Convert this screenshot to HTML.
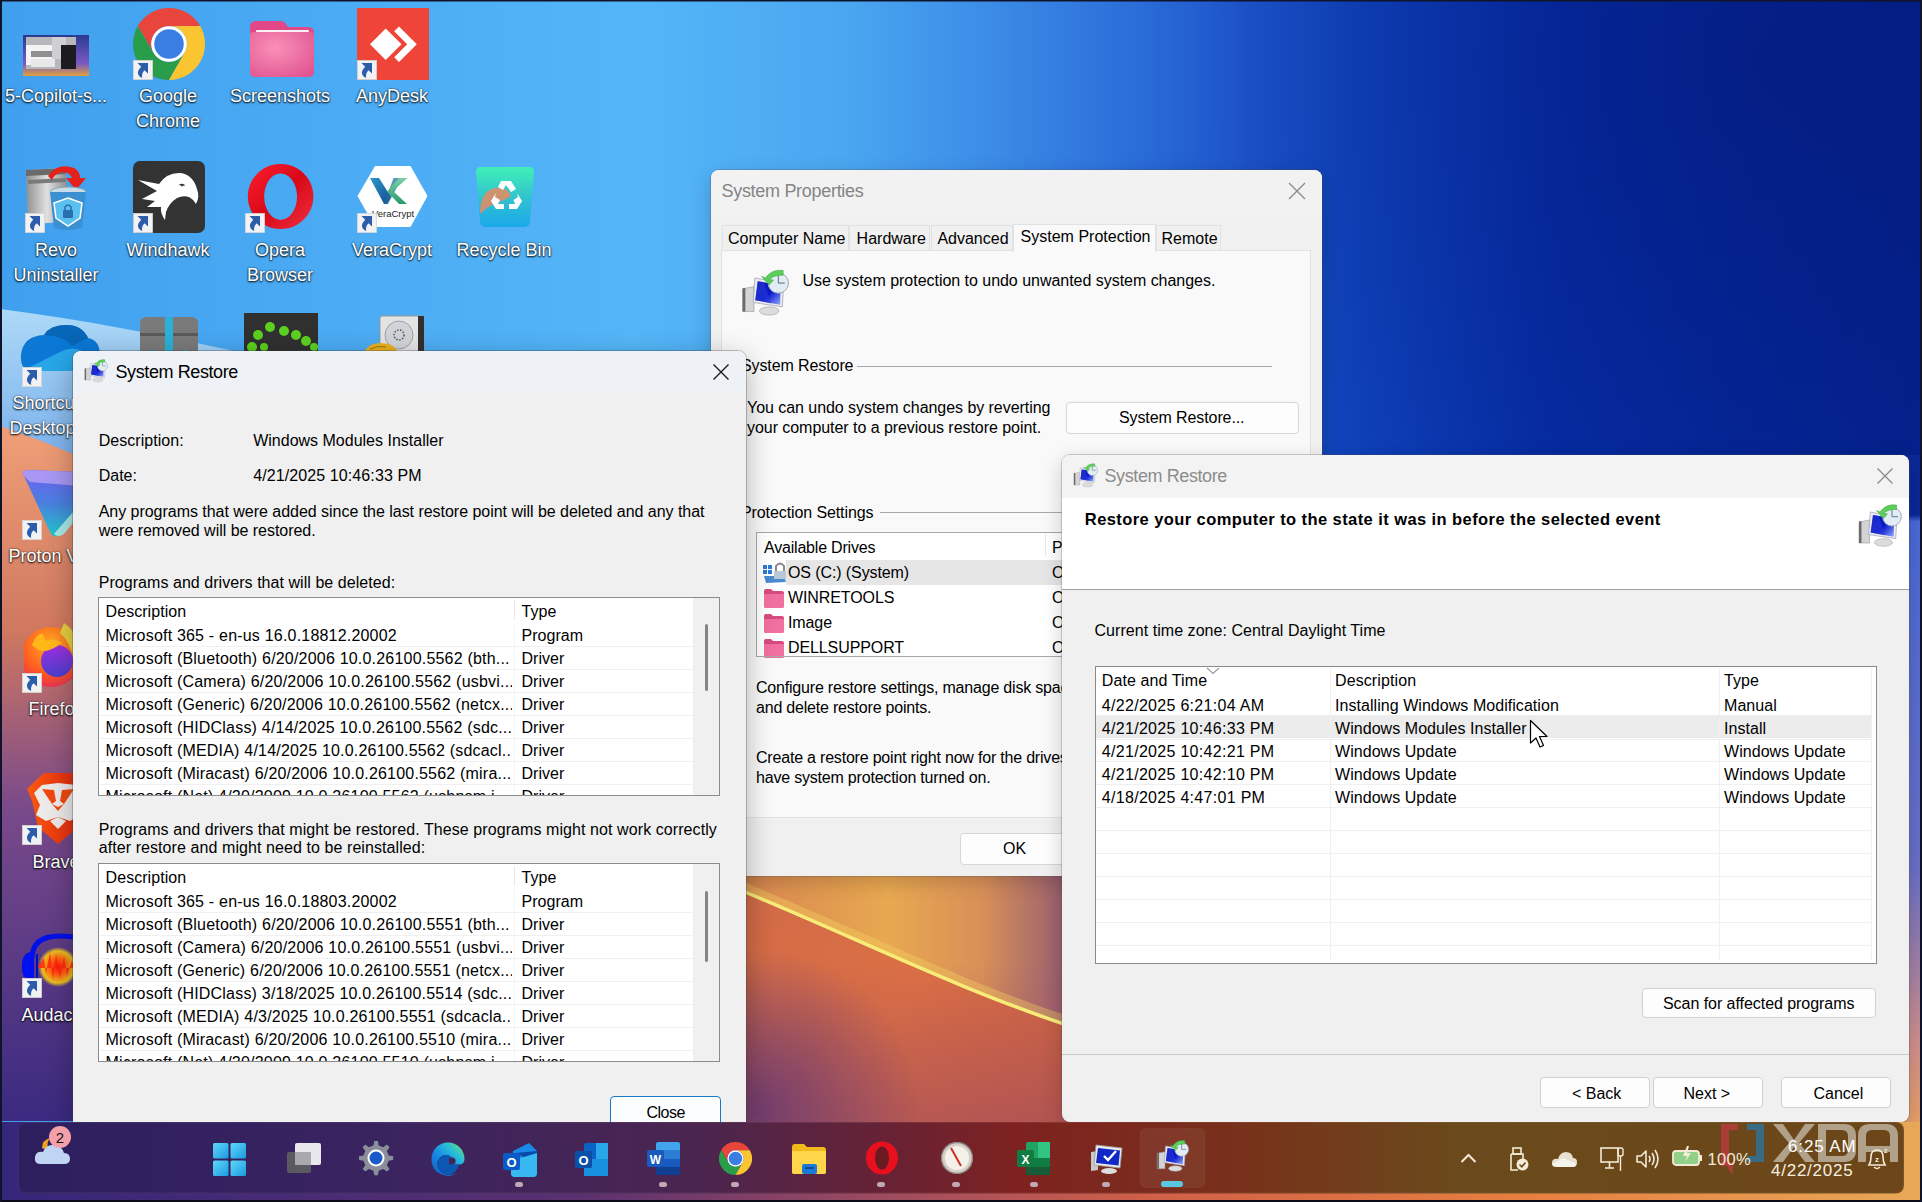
<!DOCTYPE html><html><head><meta charset="utf-8"><style>
html,body{margin:0;padding:0;width:1922px;height:1202px;overflow:hidden;background:#000;}
body{position:relative;font-family:"Liberation Sans",sans-serif;color:#000;}
.t{position:absolute;white-space:pre;font-family:"Liberation Sans",sans-serif;}
.lbl{position:absolute;white-space:pre;color:#fff;text-shadow:0 1px 2px rgba(0,0,0,.95),0 0 2px rgba(0,0,0,.7);text-align:center;font-size:18px;line-height:25px;width:110px;}
.dlg{position:absolute;overflow:hidden;background:#f0f0f0;border-radius:8px;}
.btn{position:absolute;box-sizing:border-box;background:#fdfdfd;border:1px solid #d0d0d0;border-radius:4px;}
svg{position:absolute;}
</style></head><body>
<svg width="1922" height="1202" style="left:0;top:0">
<defs>
<linearGradient id="bg" x1="0" y1="0" x2="1922" y2="0" gradientUnits="userSpaceOnUse">
<stop offset="0.000" stop-color="#40a0ee"/><stop offset="0.200" stop-color="#4cacf4"/><stop offset="0.330" stop-color="#54b6f8"/><stop offset="0.442" stop-color="#4aa6f0"/><stop offset="0.520" stop-color="#3a8ae6"/><stop offset="0.593" stop-color="#2a6cd8"/><stop offset="0.650" stop-color="#1c52c8"/><stop offset="0.708" stop-color="#0e40b8"/><stop offset="0.806" stop-color="#062ca4"/><stop offset="1.000" stop-color="#04228e"/></linearGradient>
<radialGradient id="dk" cx="1760" cy="60" r="560" gradientUnits="userSpaceOnUse">
<stop offset="0" stop-color="#000a58" stop-opacity="0.3"/><stop offset="1" stop-color="#000a58" stop-opacity="0"/></radialGradient>
<linearGradient id="bgv" x1="0" y1="0" x2="0" y2="1202" gradientUnits="userSpaceOnUse">
<stop offset="0" stop-color="#000020" stop-opacity="0.15"/><stop offset="0.3" stop-color="#000020" stop-opacity="0"/><stop offset="1" stop-color="#000020" stop-opacity="0"/></linearGradient>
<linearGradient id="band" x1="0" y1="300" x2="0" y2="460" gradientUnits="userSpaceOnUse">
<stop offset="0" stop-color="#b0dcf8"/><stop offset="1" stop-color="#7ab0ec"/></linearGradient>
<linearGradient id="org" x1="0" y1="420" x2="0" y2="1121" gradientUnits="userSpaceOnUse">
<stop offset="0" stop-color="#f0a078"/><stop offset="0.3" stop-color="#d07860"/><stop offset="0.55" stop-color="#7a4a8a"/><stop offset="1" stop-color="#3a2a80"/></linearGradient>
<linearGradient id="gap" x1="746" y1="876" x2="1062" y2="1121" gradientUnits="userSpaceOnUse">
<stop offset="0" stop-color="#d06a48"/><stop offset="0.5" stop-color="#dc7044"/><stop offset="1" stop-color="#c86040"/></linearGradient>
<radialGradient id="gapL" cx="760" cy="1110" r="160" gradientUnits="userSpaceOnUse">
<stop offset="0" stop-color="#6a3a70" stop-opacity="0.9"/><stop offset="1" stop-color="#6a3a70" stop-opacity="0"/></radialGradient>
<linearGradient id="gapV" x1="0" y1="960" x2="0" y2="1121" gradientUnits="userSpaceOnUse">
<stop offset="0" stop-color="#a04a60" stop-opacity="0"/><stop offset="1" stop-color="#a04a60" stop-opacity="0.55"/></linearGradient>
<linearGradient id="yel" x1="746" y1="876" x2="1062" y2="876" gradientUnits="userSpaceOnUse">
<stop offset="0" stop-color="#d88850"/><stop offset="0.45" stop-color="#e8a850"/><stop offset="0.75" stop-color="#d89058"/><stop offset="1" stop-color="#9a6070"/></linearGradient>
<linearGradient id="rstrip" x1="0" y1="455" x2="0" y2="1121" gradientUnits="userSpaceOnUse">
<stop offset="0" stop-color="#0a2898"/><stop offset="0.09" stop-color="#0a2898"/><stop offset="0.1" stop-color="#4a6ad8"/><stop offset="0.62" stop-color="#6a70c8"/><stop offset="0.76" stop-color="#a080a8"/><stop offset="0.88" stop-color="#d09090"/><stop offset="1" stop-color="#e8a068"/></linearGradient>
<linearGradient id="tb" x1="0" y1="0" x2="1922" y2="0" gradientUnits="userSpaceOnUse">
<stop offset="0" stop-color="#2e2266"/><stop offset="0.3" stop-color="#40245a"/><stop offset="0.45" stop-color="#5a2040"/><stop offset="0.55" stop-color="#742420"/><stop offset="0.75" stop-color="#7a3018"/><stop offset="1" stop-color="#8a5018"/></linearGradient>
<linearGradient id="tbo" x1="0" y1="0" x2="1922" y2="0" gradientUnits="userSpaceOnUse">
<stop offset="0" stop-color="#3a2a80"/><stop offset="0.4" stop-color="#8a4a70"/><stop offset="0.6" stop-color="#c06050"/><stop offset="1" stop-color="#e0a060"/></linearGradient>
</defs>
<rect width="1922" height="1202" fill="url(#bg)"/>

<rect width="1922" height="1202" fill="url(#dk)"/>
<path d="M0 309 C 120 325, 260 352, 420 400 L 420 1121 L0 1121 Z" fill="url(#band)"/>
<path d="M0 426 C 40 440, 70 452, 100 466 L 100 1121 L0 1121 Z" fill="url(#org)"/>
<rect x="740" y="870" width="330" height="260" fill="url(#gap)"/>
<path d="M740 870 L1070 870 L1070 1026 C 960 990, 850 935, 740 890 Z" fill="url(#yel)"/>
<rect x="740" y="870" width="330" height="260" fill="url(#gapV)"/>
<path d="M740 886 C 850 931, 960 986, 1070 1022" stroke="#f8d860" stroke-width="10" stroke-opacity="0.35" fill="none"/><path d="M740 890 C 850 935, 960 990, 1070 1026" stroke="#f8ec78" stroke-width="3.5" fill="none"/>
<rect x="740" y="870" width="330" height="260" fill="url(#gapL)"/>
<rect x="1900" y="455" width="22" height="670" fill="url(#rstrip)"/>
<rect x="0" y="0" width="1922" height="1.5" fill="#10142a"/>
<rect x="0" y="0" width="2" height="1202" fill="#10142a"/>
<rect x="1920" y="0" width="2" height="1202" fill="#10142a"/>
<rect x="0" y="1200" width="1922" height="2" fill="#10142a"/>
</svg>
<svg width="66" height="41" style="left:23px;top:35px" viewBox="0 0 66 41"><defs><linearGradient id="thb" x1="0" y1="0" x2="0" y2="1"><stop offset="0" stop-color="#2a3a90"/><stop offset="0.7" stop-color="#7a5ac0"/><stop offset="1" stop-color="#e0a040"/></linearGradient></defs><rect width="66" height="41" fill="url(#thb)"/><rect x="3" y="2" width="50" height="32" fill="#b8b8bc"/><rect x="3" y="10" width="26" height="20" fill="#f4f4f4"/><rect x="8" y="16" width="22" height="6" fill="#909090"/><rect x="29" y="2" width="14" height="22" fill="#d0d0d4"/><rect x="38" y="10" width="15" height="24" fill="#1c1c20"/><rect x="8" y="24" width="24" height="8" fill="#e8e8e8"/></svg>
<div class="lbl" style="left:-14px;width:140px;top:84.4px">5-Copilot-s...</div>
<svg width="72" height="72" style="left:133px;top:8px" viewBox="0 0 72 72"><path d="M67.18 18.00 A36 36 0 0 0 4.82 18.00 L20.57 44.91 A17.82 17.82 0 0 1 36.00 18.18 Z" fill="#e8453c"/><path d="M4.82 18.00 A36 36 0 0 0 36.00 72.00 L51.43 44.91 A17.82 17.82 0 0 1 20.57 44.91 Z" fill="#2a9d4a"/><path d="M36.00 72.00 A36 36 0 0 0 67.18 18.00 L36.00 18.18 A17.82 17.82 0 0 1 51.43 44.91 Z" fill="#fbc531"/><circle cx="36" cy="36" r="17.82" fill="#fff"/><circle cx="36" cy="36" r="14.76" fill="#3a7ee4"/></svg>
<svg width="20" height="20" style="left:133px;top:60px" viewBox="0 0 20 20"><rect x="0.5" y="0.5" width="19" height="19" fill="#f2f2f2" stroke="#d8d8d8" stroke-width="0.8"/><path d="M4.5 3 L15 3 L15 13.5 L11.6 10.2 Q8.4 13 9.2 18 Q3.8 15.5 5.2 11 Q6.2 8.6 8.2 6.8 Z" fill="#2c5cac"/></svg>
<div class="lbl" style="left:98px;width:140px;top:84.4px">Google</div>
<div class="lbl" style="left:98px;width:140px;top:109.1px">Chrome</div>
<svg width="64" height="56" style="left:249.5px;top:20.5px" viewBox="0 0 64 56"><defs><radialGradient id="fld" cx="0.4" cy="0.35" r="0.8"><stop offset="0" stop-color="#fa90b8"/><stop offset="1" stop-color="#e05490"/></radialGradient></defs><path d="M0 6 Q0 0 6 0 L30 0 Q34 0 36 3 L38 6 L58 6 Q64 6 64 12 L64 50 Q64 56 58 56 L6 56 Q0 56 0 50Z" fill="#e04888"/><rect x="6" y="9" width="53" height="5" rx="1" fill="#fbeef4"/><path d="M0 14 Q0 11 3 11 L61 11 Q64 11 64 14 L64 50 Q64 56 58 56 L6 56 Q0 56 0 50Z" fill="url(#fld)"/></svg>
<div class="lbl" style="left:210px;width:140px;top:84.4px">Screenshots</div>
<svg width="72" height="72" style="left:357px;top:8px" viewBox="0 0 72 72"><rect width="72" height="72" fill="#ef4438"/><path d="M28.7 20.5 L44.5 36.2 L28.7 52 L13 36.2Z" fill="#fff"/><path d="M42 18.5 L59.8 36.2 L42 54 L37.2 49.2 L50.2 36.2 L37.2 23.2Z" fill="#fff"/></svg>
<svg width="20" height="20" style="left:357px;top:60px" viewBox="0 0 20 20"><rect x="0.5" y="0.5" width="19" height="19" fill="#f2f2f2" stroke="#d8d8d8" stroke-width="0.8"/><path d="M4.5 3 L15 3 L15 13.5 L11.6 10.2 Q8.4 13 9.2 18 Q3.8 15.5 5.2 11 Q6.2 8.6 8.2 6.8 Z" fill="#2c5cac"/></svg>
<div class="lbl" style="left:322px;width:140px;top:84.4px">AnyDesk</div>
<svg width="70" height="70" style="left:22px;top:162px" viewBox="0 0 70 70"><defs><linearGradient id="rvb" x1="0" y1="0" x2="1" y2="0"><stop offset="0" stop-color="#909090"/><stop offset="0.5" stop-color="#e0e0e0"/><stop offset="1" stop-color="#8a8a8a"/></linearGradient></defs><path d="M4 8 L44 6 L46 60 L6 62Z" fill="url(#rvb)"/><path d="M4 8 L44 6 L44 12 L4 14Z" fill="#6a6a6a"/><path d="M6 18 L44 16 L44 20 L6 22Z" fill="#7a7a7a"/><path d="M26 14 Q36 0 52 6 Q58 9 58 16 L64 16 L54 28 L44 16 L50 16 Q48 10 40 10 Q32 12 30 18Z" fill="#e8201a"/><ellipse cx="46" cy="30" rx="18" ry="5" fill="#c8dcea" stroke="#8aa" stroke-width="1"/><path d="M28 30 L64 30 L60 66 Q46 70 32 66Z" fill="#3a90d0"/><path d="M46 36 L60 41 L58 56 L46 64 L34 56 L32 41Z" fill="#5ac0f0" stroke="#fff" stroke-width="1.5"/><rect x="41" y="48" width="10" height="8" rx="1" fill="#2a70b0"/><path d="M43 48 L43 45 Q46 41 49 45 L49 48" stroke="#2a70b0" stroke-width="1.6" fill="none"/></svg>
<svg width="20" height="20" style="left:25px;top:213px" viewBox="0 0 20 20"><rect x="0.5" y="0.5" width="19" height="19" fill="#f2f2f2" stroke="#d8d8d8" stroke-width="0.8"/><path d="M4.5 3 L15 3 L15 13.5 L11.6 10.2 Q8.4 13 9.2 18 Q3.8 15.5 5.2 11 Q6.2 8.6 8.2 6.8 Z" fill="#2c5cac"/></svg>
<div class="lbl" style="left:-14px;width:140px;top:238.4px">Revo</div>
<div class="lbl" style="left:-14px;width:140px;top:263.1px">Uninstaller</div>
<svg width="72" height="72" style="left:133px;top:161px" viewBox="0 0 72 72"><rect width="72" height="72" rx="7" fill="#333"/><path d="M5 19 L26 23 Q34 11 48 12 Q60 14 64 28 Q67 36 63 43 Q60 38 56 36 Q50 34 44 37 Q36 42 33 51 L32 59 Q27 52 28 46 L14 46 L22 40 L9 38 L24 30Z" fill="#fff"/><path d="M46.5 24 Q49 22.5 51.5 24.5" stroke="#333" stroke-width="1.3" fill="none"/><circle cx="49" cy="24.6" r="1" fill="#333"/></svg>
<svg width="20" height="20" style="left:133px;top:213px" viewBox="0 0 20 20"><rect x="0.5" y="0.5" width="19" height="19" fill="#f2f2f2" stroke="#d8d8d8" stroke-width="0.8"/><path d="M4.5 3 L15 3 L15 13.5 L11.6 10.2 Q8.4 13 9.2 18 Q3.8 15.5 5.2 11 Q6.2 8.6 8.2 6.8 Z" fill="#2c5cac"/></svg>
<div class="lbl" style="left:98px;width:140px;top:238.4px">Windhawk</div>
<svg width="68" height="68" style="left:247px;top:163px" viewBox="0 0 68 68"><defs><linearGradient id="opr" x1="0" y1="0" x2="1" y2="1"><stop offset="0" stop-color="#ff2030"/><stop offset="0.5" stop-color="#d80818"/><stop offset="1" stop-color="#f03040"/></linearGradient></defs><path d="M33.6 1 A32.8 32.5 0 1 0 33.61 1Z M33.6 10.5 A16.4 23.2 0 1 1 33.59 10.5Z" fill="url(#opr)" fill-rule="evenodd"/></svg>
<svg width="20" height="20" style="left:245px;top:213px" viewBox="0 0 20 20"><rect x="0.5" y="0.5" width="19" height="19" fill="#f2f2f2" stroke="#d8d8d8" stroke-width="0.8"/><path d="M4.5 3 L15 3 L15 13.5 L11.6 10.2 Q8.4 13 9.2 18 Q3.8 15.5 5.2 11 Q6.2 8.6 8.2 6.8 Z" fill="#2c5cac"/></svg>
<div class="lbl" style="left:210px;width:140px;top:238.4px">Opera</div>
<div class="lbl" style="left:210px;width:140px;top:263.1px">Browser</div>
<svg width="72" height="64" style="left:357px;top:165px" viewBox="0 0 72 64"><path d="M18 1 L53.5 1 L70.5 31 L53.5 62 L18 62 L0.5 31Z" fill="#fff"/><defs><linearGradient id="vcv" x1="0" y1="0" x2="1" y2="1"><stop offset="0" stop-color="#2a9ac8"/><stop offset="1" stop-color="#1a4a90"/></linearGradient><linearGradient id="vcc" x1="0" y1="0" x2="0" y2="1"><stop offset="0" stop-color="#7ad0a8"/><stop offset="1" stop-color="#2a9a68"/></linearGradient></defs><path d="M13 13 L22 13 L34 32 L30 39 L27 39Z" fill="url(#vcv)"/><path d="M36.5 13 L45 13 L31 39 L27 39Z" fill="#1a6a98" opacity="0.7"/><path d="M50.5 13 L36 26 L50 39 L42 39 L30 26.5 L42 13Z" fill="url(#vcc)"/><text x="36" y="52" font-size="9.5" text-anchor="middle" fill="#222" font-family="Liberation Sans">VeraCrypt</text></svg>
<svg width="20" height="20" style="left:357px;top:213px" viewBox="0 0 20 20"><rect x="0.5" y="0.5" width="19" height="19" fill="#f2f2f2" stroke="#d8d8d8" stroke-width="0.8"/><path d="M4.5 3 L15 3 L15 13.5 L11.6 10.2 Q8.4 13 9.2 18 Q3.8 15.5 5.2 11 Q6.2 8.6 8.2 6.8 Z" fill="#2c5cac"/></svg>
<div class="lbl" style="left:322px;width:140px;top:238.4px">VeraCrypt</div>
<svg width="60" height="62" style="left:475px;top:166px" viewBox="0 0 60 62"><defs><linearGradient id="rb" x1="0" y1="0" x2="0" y2="1"><stop offset="0" stop-color="#40f0b8"/><stop offset="0.55" stop-color="#30c0d0"/><stop offset="1" stop-color="#1aa8ec"/></linearGradient></defs><path d="M1 6 Q1 1 6 1 L54 1 Q59 1 59 6 L55 55 Q54.5 61 49 61 L11 61 Q5.5 61 5 55Z" fill="url(#rb)"/><path d="M5 45 Q6 25 20 22 Q32 20 36 30 Q30 34 24 36 Q12 40 5 48Z" fill="#e88a60" opacity="0.85"/><g fill="#fff"><path d="M26 15 L36 15 L41 23 L36 26 L31 19 L28 24 L23 21Z"/><path d="M42 27 L47 35 L42 43 L34 43 L34 38 L40 38 L38.5 34 L43 31Z" transform="translate(0 0)"/><path d="M21 27 L16 35 L21 43 L29 43 L29 38 L23 38 L25 34 L20 31Z"/></g></svg>
<div class="lbl" style="left:434px;width:140px;top:238.4px">Recycle Bin</div>
<svg width="62" height="60" style="left:138px;top:317px" viewBox="0 0 62 60"><rect x="2" y="0" width="58" height="60" rx="6" fill="#7a7a7a"/><rect x="2" y="16" width="58" height="3" fill="#5a5a5a"/><rect x="27" y="0" width="8" height="60" fill="#2ab0d8"/><circle cx="14" cy="40" r="7" fill="#2ab0d8"/><circle cx="48" cy="40" r="7" fill="#2ab0d8"/></svg>
<svg width="74" height="40" style="left:244px;top:313px" viewBox="0 0 74 40"><rect width="74" height="40" fill="#303030"/><g fill="#5ad020"><circle cx="8" cy="34" r="5"/><circle cx="14" cy="22" r="5"/><circle cx="26" cy="14" r="5"/><circle cx="40" cy="18" r="5"/><circle cx="52" cy="22" r="5"/><circle cx="62" cy="28" r="5"/><circle cx="70" cy="34" r="4"/><circle cx="20" cy="34" r="4"/></g></svg>
<svg width="64" height="40" style="left:362px;top:315px" viewBox="0 0 64 40"><rect x="18" y="1" width="44" height="40" rx="2" fill="#e4e4e4" stroke="#9a9a9a" stroke-width="1"/><rect x="56" y="1" width="6" height="40" fill="#303030"/><circle cx="37" cy="20" r="14" fill="#d0d4d8" stroke="#a0a0a0"/><circle cx="37" cy="20" r="5" fill="none" stroke="#555" stroke-width="1.5" stroke-dasharray="1.5 1.5"/><path d="M2 38 Q6 28 18 28 Q30 28 34 34 L36 40 L0 40Z" fill="#e8b020"/><path d="M8 34 Q16 30 24 32" stroke="#a87010" stroke-width="1" fill="none"/></svg>
<svg width="80" height="50" style="left:20px;top:324px" viewBox="0 0 80 50"><path d="M10 47 Q0 45 1 31 Q3 12 24 11 Q30 1 46 1 Q62 1 68 14 Q80 16 80 32 Q80 47 66 47Z" fill="#0a78d4"/><path d="M24 11 Q30 1 46 1 Q62 1 68 14 L52 22 Q44 12 24 11Z" fill="#0866b8"/><path d="M6 45 L40 28 Q50 22 60 26 L80 34 Q80 47 66 47 L10 47 Q7 47 6 45Z" fill="#28a6e8"/></svg>
<svg width="20" height="20" style="left:22px;top:367px" viewBox="0 0 20 20"><rect x="0.5" y="0.5" width="19" height="19" fill="#f2f2f2" stroke="#d8d8d8" stroke-width="0.8"/><path d="M4.5 3 L15 3 L15 13.5 L11.6 10.2 Q8.4 13 9.2 18 Q3.8 15.5 5.2 11 Q6.2 8.6 8.2 6.8 Z" fill="#2c5cac"/></svg>
<div class="lbl" style="left:-14px;width:140px;top:391.4px">Shortcut to</div>
<div class="lbl" style="left:-14px;width:140px;top:416.1px">Desktop (2)</div>
<svg width="60" height="70" style="left:20px;top:468px" viewBox="0 0 60 70"><defs><linearGradient id="pv" x1="0" y1="0" x2="0" y2="1"><stop offset="0" stop-color="#7060f0"/><stop offset="0.5" stop-color="#4a80e0"/><stop offset="1" stop-color="#20c8c8"/></linearGradient></defs><path d="M4 8 Q0 2 8 2 L60 4 L60 40 L40 66 Q34 72 30 64Z" fill="url(#pv)"/><path d="M4 8 Q0 2 8 2 L60 4 L60 18 L10 14Z" fill="#a898f4"/><path d="M60 36 L60 46 L44 66 Q38 70 34 66Z" fill="#a8e8e8"/></svg>
<svg width="20" height="20" style="left:22px;top:520px" viewBox="0 0 20 20"><rect x="0.5" y="0.5" width="19" height="19" fill="#f2f2f2" stroke="#d8d8d8" stroke-width="0.8"/><path d="M4.5 3 L15 3 L15 13.5 L11.6 10.2 Q8.4 13 9.2 18 Q3.8 15.5 5.2 11 Q6.2 8.6 8.2 6.8 Z" fill="#2c5cac"/></svg>
<div class="lbl" style="left:-14px;width:140px;top:544.4px">Proton VPN</div>
<svg width="56" height="68" style="left:24px;top:621px" viewBox="0 0 56 68"><defs><radialGradient id="ffo" cx="0.5" cy="0.3" r="0.8"><stop offset="0" stop-color="#ffb020"/><stop offset="0.6" stop-color="#ff5a20"/><stop offset="1" stop-color="#e0206a"/></radialGradient><linearGradient id="ffp" x1="0" y1="0" x2="0" y2="1"><stop offset="0" stop-color="#a030e0"/><stop offset="1" stop-color="#4a40d0"/></linearGradient></defs><circle cx="27" cy="36" r="30" fill="url(#ffo)"/><path d="M40 2 Q56 12 56 40 L50 40 Q46 20 36 12Z" fill="#e8d040"/><circle cx="33" cy="40" r="16" fill="url(#ffp)"/><path d="M8 24 Q12 14 18 12 L22 20 Q30 16 38 22 Q30 28 22 30 Q14 30 8 24Z" fill="#ffb818"/></svg>
<svg width="20" height="20" style="left:22px;top:673px" viewBox="0 0 20 20"><rect x="0.5" y="0.5" width="19" height="19" fill="#f2f2f2" stroke="#d8d8d8" stroke-width="0.8"/><path d="M4.5 3 L15 3 L15 13.5 L11.6 10.2 Q8.4 13 9.2 18 Q3.8 15.5 5.2 11 Q6.2 8.6 8.2 6.8 Z" fill="#2c5cac"/></svg>
<div class="lbl" style="left:-14px;width:140px;top:697.4px">Firefox</div>
<svg width="62" height="74" style="left:26px;top:771px" viewBox="0 0 62 74"><defs><linearGradient id="brv" x1="0" y1="0" x2="1" y2="0"><stop offset="0" stop-color="#f85a10"/><stop offset="1" stop-color="#e02010"/></linearGradient></defs><path d="M18 2 L48 2 L56 12 L62 18 L58 30 L52 56 L32 73 L12 56 L6 30 L1 18 L7 12Z" fill="url(#brv)"/><path d="M16 14 L32 12 L50 14 L56 22 L50 34 L54 44 L44 50 L32 46 L20 50 L10 44 L14 34 L8 22Z" fill="#ecebea"/><path d="M16 18 L28 19 L30 30 L26 33 Z M48 18 L36 19 L34 30 L38 33Z" fill="#f04a10"/><path d="M24 50 L32 46 L40 50 L32 58Z" fill="#ecebea"/><path d="M26 33 L32 36 L38 33 L32 40Z" fill="#f04a10"/></svg>
<svg width="20" height="20" style="left:22px;top:825px" viewBox="0 0 20 20"><rect x="0.5" y="0.5" width="19" height="19" fill="#f2f2f2" stroke="#d8d8d8" stroke-width="0.8"/><path d="M4.5 3 L15 3 L15 13.5 L11.6 10.2 Q8.4 13 9.2 18 Q3.8 15.5 5.2 11 Q6.2 8.6 8.2 6.8 Z" fill="#2c5cac"/></svg>
<div class="lbl" style="left:-14px;width:140px;top:850.4px">Brave</div>
<svg width="56" height="62" style="left:20px;top:928px" viewBox="0 0 56 62"><defs><radialGradient id="aud" cx="0.5" cy="0.5" r="0.5"><stop offset="0" stop-color="#ff1010"/><stop offset="0.45" stop-color="#ff6a10"/><stop offset="0.8" stop-color="#e8c020"/><stop offset="1" stop-color="#e8c020" stop-opacity="0"/></radialGradient></defs><path d="M12 30 Q12 8 40 8 Q56 8 60 12" stroke="#0010e8" stroke-width="5" fill="none"/><path d="M2 38 Q2 24 12 24 L14 24 L14 50 L8 50 Q2 50 2 40Z" fill="#0010f0"/><path d="M16 26 L18 26 L18 50 L16 50Z" fill="#0010c0"/><ellipse cx="38" cy="39" rx="20" ry="20" fill="url(#aud)"/><path d="M18 38 L24 30 L26 46 L30 24 L33 52 L36 26 L40 50 L44 28 L47 48 L52 32 L56 44 L56 40 L18 40Z" fill="#ff2010" opacity="0.8"/></svg>
<svg width="20" height="20" style="left:22px;top:978px" viewBox="0 0 20 20"><rect x="0.5" y="0.5" width="19" height="19" fill="#f2f2f2" stroke="#d8d8d8" stroke-width="0.8"/><path d="M4.5 3 L15 3 L15 13.5 L11.6 10.2 Q8.4 13 9.2 18 Q3.8 15.5 5.2 11 Q6.2 8.6 8.2 6.8 Z" fill="#2c5cac"/></svg>
<div class="lbl" style="left:-14px;width:140px;top:1003.4px">Audacity</div>
<div class="dlg" style="left:711px;top:170px;width:611px;height:706px;box-shadow:0 0 0 1px rgba(80,80,80,.25),0 6px 20px rgba(0,0,0,.18);">
<div style="position:absolute;left:0px;top:0px;width:611px;height:46px;background:#f2f2f2"></div>
<div class="t" style="left:10.5px;top:11.56px;font-size:18px;line-height:18px;color:#858585;letter-spacing:-0.3px;">System Properties</div>
<svg width="18" height="18" style="left:577px;top:12px" viewBox="0 0 18 18"><path d="M1 1 L17 17 M17 1 L1 17" stroke="#8a8a8a" stroke-width="1.3"/></svg>
<div style="position:absolute;left:10px;top:80px;width:589.5px;height:568px;background:#f9f9f9;border:1px solid #e2e2e2;box-sizing:border-box"></div>
<div style="position:absolute;left:11px;top:55.4px;width:127.4px;height:25.1px;background:#f0f0f0;border:1px solid #e2e2e2;border-bottom:none;box-sizing:border-box"></div>
<div class="t" style="left:17px;top:60.96px;font-size:16px;line-height:16px;">Computer Name</div>
<div style="position:absolute;left:138.4px;top:55.4px;width:81.1px;height:25.1px;background:#f0f0f0;border:1px solid #e2e2e2;border-bottom:none;box-sizing:border-box"></div>
<div class="t" style="left:145.6px;top:60.96px;font-size:16px;line-height:16px;">Hardware</div>
<div style="position:absolute;left:219.5px;top:55.4px;width:82.2px;height:25.1px;background:#f0f0f0;border:1px solid #e2e2e2;border-bottom:none;box-sizing:border-box"></div>
<div class="t" style="left:226.4px;top:60.96px;font-size:16px;line-height:16px;">Advanced</div>
<div style="position:absolute;left:301.7px;top:54px;width:143.0px;height:27.5px;background:#f9f9f9;border:1px solid #e2e2e2;border-bottom:none;box-sizing:border-box"></div>
<div class="t" style="left:309.6px;top:59.06px;font-size:16px;line-height:16px;">System Protection</div>
<div style="position:absolute;left:444.7px;top:55.4px;width:65.3px;height:25.1px;background:#f0f0f0;border:1px solid #e2e2e2;border-bottom:none;box-sizing:border-box"></div>
<div class="t" style="left:450.5px;top:60.96px;font-size:16px;line-height:16px;">Remote</div>
<svg width="58.5" height="54.1" style="left:24.0px;top:94.6px" viewBox="0 0 54 50"><defs><linearGradient id="scr1" x1="0" y1="0" x2="1" y2="1"><stop offset="0" stop-color="#0818a8"/><stop offset="0.55" stop-color="#0a1ad0"/><stop offset="1" stop-color="#90a8f8"/></linearGradient></defs><path d="M7 22 L17.5 20 L17.5 43 L7 43Z" fill="#d4d4d4" stroke="#9a9a9a" stroke-width="0.6"/><path d="M7 21.5 L9.5 21.2 L9.5 43 L7 43Z" fill="#6a6a6a"/><ellipse cx="31.5" cy="42.5" rx="9" ry="3.8" fill="#dcdcdc" stroke="#a8a8a8" stroke-width="0.6"/><path d="M18.3 12 L45 17 L43.7 38.7 L16.7 34.6Z" fill="#eaeaf2" stroke="#a0a0b0" stroke-width="0.7"/><path d="M21 15 L42 18.5 L41.7 36.7 L18.7 32.5Z" fill="url(#scr1)"/><path d="M21 15 L27 16 L33 35.5 L18.7 32.5Z" fill="#2a3ad8" opacity="0.55"/><circle cx="40" cy="16.7" r="9.4" fill="#e2ecf4" stroke="#9aa4b0" stroke-width="0.9"/><path d="M40 9.5 L40 16.7 L46 16.7" stroke="#4a5a70" stroke-width="0.8" fill="none"/><path d="M44.5 5 Q34 3.5 28 12 L24.5 10.5 L31.5 18.5 L35.5 13.8 L31.5 13.5 Q36 9 44.5 9.5Z" fill="#5ad05a" stroke="#3a9a3a" stroke-width="0.5"/></svg>
<div class="t" style="left:91.5px;top:103.46px;font-size:16px;line-height:16px;letter-spacing:-0.03px;">Use system protection to undo unwanted system changes.</div>
<div class="t" style="left:30px;top:188.46px;font-size:16px;line-height:16px;letter-spacing:-0.1px;">System Restore</div>
<div style="position:absolute;left:146px;top:195.5px;width:415px;height:1px;background:#a8a8a8"></div>
<div class="t" style="left:36px;top:229.96px;font-size:16px;line-height:16px;letter-spacing:-0.05px;">You can undo system changes by reverting</div>
<div class="t" style="left:36px;top:250.26px;font-size:16px;line-height:16px;letter-spacing:-0.05px;">your computer to a previous restore point.</div>
<div class="btn" style="left:354.5px;top:231.5px;width:233px;height:32px;border-color:#d6d6d6"></div>
<div class="t" style="left:408px;top:240.46px;font-size:16px;line-height:16px;letter-spacing:-0.1px;">System Restore...</div>
<div class="t" style="left:30px;top:334.96px;font-size:16px;line-height:16px;letter-spacing:-0.1px;">Protection Settings</div>
<div style="position:absolute;left:169px;top:342px;width:420px;height:1px;background:#a8a8a8"></div>
<div style="position:absolute;left:45px;top:362px;width:400px;height:125px;background:#fff;border:1px solid #a8a8a8;box-sizing:border-box"></div>
<div style="position:absolute;left:334px;top:364px;width:1px;height:22px;background:#e6e6e6"></div>
<div class="t" style="left:53px;top:369.96px;font-size:16px;line-height:16px;letter-spacing:-0.2px;">Available Drives</div>
<div class="t" style="left:341px;top:369.96px;font-size:16px;line-height:16px;">P</div>
<div style="position:absolute;left:75px;top:390px;width:300px;height:25px;background:#e6e6e6"></div>
<div class="t" style="left:77px;top:395.46px;font-size:16px;line-height:16px;letter-spacing:-0.1px;">OS (C:) (System)</div>
<div class="t" style="left:341px;top:395.46px;font-size:16px;line-height:16px;">O</div>
<svg width="26" height="24" style="left:51px;top:391px" viewBox="0 0 26 24"><rect x="1" y="4" width="4" height="4" fill="#2a7ad8"/><rect x="6" y="4" width="4" height="4" fill="#2a7ad8"/><rect x="1" y="9" width="4" height="4" fill="#2a7ad8"/><rect x="6" y="9" width="4" height="4" fill="#2a7ad8"/><path d="M2 15 L22 15 L24 21 L4 22Z" fill="#4a8ad0"/><path d="M14 12 L14 5 Q18 0 22 5 L22 12" stroke="#888" stroke-width="2" fill="none"/><rect x="12" y="10" width="12" height="8" fill="#b8c8d8"/></svg>
<div class="t" style="left:77px;top:420.46px;font-size:16px;line-height:16px;letter-spacing:-0.1px;">WINRETOOLS</div>
<div class="t" style="left:341px;top:420.46px;font-size:16px;line-height:16px;">O</div>
<svg width="22" height="20" style="left:52px;top:418px" viewBox="0 0 22 20"><path d="M1 3 Q1 1 3 1 L8 1 L10 3 L19 3 Q21 3 21 5 L21 18 Q21 20 19 20 L3 20 Q1 20 1 18Z" fill="#d84a80"/><path d="M1 6 L21 6 L21 18 Q21 20 19 20 L3 20 Q1 20 1 18Z" fill="#f070a0"/></svg>
<div class="t" style="left:77px;top:445.46px;font-size:16px;line-height:16px;letter-spacing:-0.1px;">Image</div>
<div class="t" style="left:341px;top:445.46px;font-size:16px;line-height:16px;">O</div>
<svg width="22" height="20" style="left:52px;top:443px" viewBox="0 0 22 20"><path d="M1 3 Q1 1 3 1 L8 1 L10 3 L19 3 Q21 3 21 5 L21 18 Q21 20 19 20 L3 20 Q1 20 1 18Z" fill="#d84a80"/><path d="M1 6 L21 6 L21 18 Q21 20 19 20 L3 20 Q1 20 1 18Z" fill="#f070a0"/></svg>
<div class="t" style="left:77px;top:469.96px;font-size:16px;line-height:16px;letter-spacing:-0.1px;">DELLSUPPORT</div>
<div class="t" style="left:341px;top:469.96px;font-size:16px;line-height:16px;">O</div>
<svg width="22" height="20" style="left:52px;top:467.5px" viewBox="0 0 22 20"><path d="M1 3 Q1 1 3 1 L8 1 L10 3 L19 3 Q21 3 21 5 L21 18 Q21 20 19 20 L3 20 Q1 20 1 18Z" fill="#d84a80"/><path d="M1 6 L21 6 L21 18 Q21 20 19 20 L3 20 Q1 20 1 18Z" fill="#f070a0"/></svg>
<div style="position:absolute;left:45px;top:486px;width:400px;height:1px;background:#a8a8a8"></div>
<div class="t" style="left:45px;top:510.46px;font-size:16px;line-height:16px;letter-spacing:-0.2px;">Configure restore settings, manage disk space,</div>
<div class="t" style="left:45px;top:530.46px;font-size:16px;line-height:16px;letter-spacing:-0.2px;">and delete restore points.</div>
<div class="t" style="left:45px;top:580.46px;font-size:16px;line-height:16px;letter-spacing:-0.2px;">Create a restore point right now for the drives that</div>
<div class="t" style="left:45px;top:600.46px;font-size:16px;line-height:16px;letter-spacing:-0.2px;">have system protection turned on.</div>
<div style="position:absolute;left:0px;top:649px;width:611px;height:57px;background:#f0f0f0"></div>
<div class="btn" style="left:248.5px;top:662.5px;width:110px;height:32px;border-color:#d6d6d6"></div>
<div class="t" style="left:292px;top:671.46px;font-size:16px;line-height:16px;">OK</div>
</div>
<div class="dlg" style="left:1062px;top:455px;width:847px;height:667px;box-shadow:0 0 0 1px rgba(80,80,80,.25),0 6px 20px rgba(0,0,0,.2);">
<div style="position:absolute;left:0px;top:0px;width:847px;height:43px;background:#f3f3f3"></div>
<svg width="30.2" height="28.0" style="left:7.6px;top:5.7px" viewBox="0 0 54 50"><defs><linearGradient id="scr2" x1="0" y1="0" x2="1" y2="1"><stop offset="0" stop-color="#0818a8"/><stop offset="0.55" stop-color="#0a1ad0"/><stop offset="1" stop-color="#90a8f8"/></linearGradient></defs><path d="M7 22 L17.5 20 L17.5 43 L7 43Z" fill="#d4d4d4" stroke="#9a9a9a" stroke-width="0.6"/><path d="M7 21.5 L9.5 21.2 L9.5 43 L7 43Z" fill="#6a6a6a"/><ellipse cx="31.5" cy="42.5" rx="9" ry="3.8" fill="#dcdcdc" stroke="#a8a8a8" stroke-width="0.6"/><path d="M18.3 12 L45 17 L43.7 38.7 L16.7 34.6Z" fill="#eaeaf2" stroke="#a0a0b0" stroke-width="0.7"/><path d="M21 15 L42 18.5 L41.7 36.7 L18.7 32.5Z" fill="url(#scr2)"/><path d="M21 15 L27 16 L33 35.5 L18.7 32.5Z" fill="#2a3ad8" opacity="0.55"/><circle cx="40" cy="16.7" r="9.4" fill="#e2ecf4" stroke="#9aa4b0" stroke-width="0.9"/><path d="M40 9.5 L40 16.7 L46 16.7" stroke="#4a5a70" stroke-width="0.8" fill="none"/><path d="M44.5 5 Q34 3.5 28 12 L24.5 10.5 L31.5 18.5 L35.5 13.8 L31.5 13.5 Q36 9 44.5 9.5Z" fill="#5ad05a" stroke="#3a9a3a" stroke-width="0.5"/></svg>
<div class="t" style="left:42.5px;top:12.26px;font-size:18px;line-height:18px;color:#8c8c8c;letter-spacing:-0.4px;">System Restore</div>
<svg width="18" height="18" style="left:813.5px;top:11.5px" viewBox="0 0 18 18"><path d="M1.5 1.5 L16.5 16.5 M16.5 1.5 L1.5 16.5" stroke="#8a8a8a" stroke-width="1.3"/></svg>
<div style="position:absolute;left:0px;top:43px;width:847px;height:91px;background:#fff"></div>
<div style="position:absolute;left:0px;top:134px;width:847px;height:1px;background:#a0a0a0"></div>
<div class="t" style="left:22.799999999999955px;top:56.23px;font-size:16.5px;line-height:16.5px;font-weight:700;letter-spacing:0.42px;">Restore your computer to the state it was in before the selected event</div>
<svg width="54.0" height="50.0" style="left:790.0px;top:45.0px" viewBox="0 0 54 50"><defs><linearGradient id="scr3" x1="0" y1="0" x2="1" y2="1"><stop offset="0" stop-color="#0818a8"/><stop offset="0.55" stop-color="#0a1ad0"/><stop offset="1" stop-color="#90a8f8"/></linearGradient></defs><path d="M7 22 L17.5 20 L17.5 43 L7 43Z" fill="#d4d4d4" stroke="#9a9a9a" stroke-width="0.6"/><path d="M7 21.5 L9.5 21.2 L9.5 43 L7 43Z" fill="#6a6a6a"/><ellipse cx="31.5" cy="42.5" rx="9" ry="3.8" fill="#dcdcdc" stroke="#a8a8a8" stroke-width="0.6"/><path d="M18.3 12 L45 17 L43.7 38.7 L16.7 34.6Z" fill="#eaeaf2" stroke="#a0a0b0" stroke-width="0.7"/><path d="M21 15 L42 18.5 L41.7 36.7 L18.7 32.5Z" fill="url(#scr3)"/><path d="M21 15 L27 16 L33 35.5 L18.7 32.5Z" fill="#2a3ad8" opacity="0.55"/><circle cx="40" cy="16.7" r="9.4" fill="#e2ecf4" stroke="#9aa4b0" stroke-width="0.9"/><path d="M40 9.5 L40 16.7 L46 16.7" stroke="#4a5a70" stroke-width="0.8" fill="none"/><path d="M44.5 5 Q34 3.5 28 12 L24.5 10.5 L31.5 18.5 L35.5 13.8 L31.5 13.5 Q36 9 44.5 9.5Z" fill="#5ad05a" stroke="#3a9a3a" stroke-width="0.5"/></svg>
<div class="t" style="left:32.5px;top:168.16px;font-size:16px;line-height:16px;letter-spacing:0.05px;">Current time zone: Central Daylight Time</div>
<div style="position:absolute;left:32.5px;top:210.5px;width:782px;height:298px;background:#fff;border:1px solid #8a8a8a;box-sizing:border-box"></div>
<div style="position:absolute;left:34px;top:259.5px;width:776px;height:23.5px;background:#ececec"></div>
<div style="position:absolute;left:34px;top:283.5px;width:776px;height:1px;background:#f0f0f0"></div>
<div style="position:absolute;left:34px;top:305.5px;width:776px;height:1px;background:#f0f0f0"></div>
<div style="position:absolute;left:34px;top:328.5px;width:776px;height:1px;background:#f0f0f0"></div>
<div style="position:absolute;left:34px;top:351.5px;width:776px;height:1px;background:#f0f0f0"></div>
<div style="position:absolute;left:34px;top:374.5px;width:776px;height:1px;background:#f0f0f0"></div>
<div style="position:absolute;left:34px;top:397.5px;width:776px;height:1px;background:#f0f0f0"></div>
<div style="position:absolute;left:34px;top:420.5px;width:776px;height:1px;background:#f0f0f0"></div>
<div style="position:absolute;left:34px;top:443.5px;width:776px;height:1px;background:#f0f0f0"></div>
<div style="position:absolute;left:34px;top:466.5px;width:776px;height:1px;background:#f0f0f0"></div>
<div style="position:absolute;left:34px;top:489.5px;width:776px;height:1px;background:#f0f0f0"></div>
<div style="position:absolute;left:267.5px;top:213px;width:1px;height:293px;background:#f0f0f0"></div>
<div style="position:absolute;left:656.5px;top:213px;width:1px;height:293px;background:#f0f0f0"></div>
<div style="position:absolute;left:809px;top:213px;width:1px;height:293px;background:#f0f0f0"></div>
<svg width="14" height="8" style="left:144px;top:212px" viewBox="0 0 14 8"><path d="M1 1 L7 6.5 L13 1" stroke="#9a9a9a" stroke-width="1.1" fill="none"/></svg>
<div class="t" style="left:39.799999999999955px;top:218.26px;font-size:16px;line-height:16px;letter-spacing:0.1px;">Date and Time</div>
<div class="t" style="left:273px;top:218.26px;font-size:16px;line-height:16px;letter-spacing:0.1px;">Description</div>
<div class="t" style="left:662px;top:218.26px;font-size:16px;line-height:16px;letter-spacing:0.1px;">Type</div>
<div class="t" style="left:39.799999999999955px;top:242.56px;font-size:16px;line-height:16px;letter-spacing:0.3px;">4/22/2025 6:21:04 AM</div>
<div class="t" style="left:273px;top:242.56px;font-size:16px;line-height:16px;letter-spacing:0.05px;">Installing Windows Modification</div>
<div class="t" style="left:662px;top:242.56px;font-size:16px;line-height:16px;letter-spacing:0.05px;">Manual</div>
<div class="t" style="left:39.799999999999955px;top:265.56px;font-size:16px;line-height:16px;letter-spacing:0.3px;">4/21/2025 10:46:33 PM</div>
<div class="t" style="left:273px;top:265.56px;font-size:16px;line-height:16px;letter-spacing:0.05px;">Windows Modules Installer</div>
<div class="t" style="left:662px;top:265.56px;font-size:16px;line-height:16px;letter-spacing:0.05px;">Install</div>
<div class="t" style="left:39.799999999999955px;top:288.56px;font-size:16px;line-height:16px;letter-spacing:0.3px;">4/21/2025 10:42:21 PM</div>
<div class="t" style="left:273px;top:288.56px;font-size:16px;line-height:16px;letter-spacing:0.05px;">Windows Update</div>
<div class="t" style="left:662px;top:288.56px;font-size:16px;line-height:16px;letter-spacing:0.05px;">Windows Update</div>
<div class="t" style="left:39.799999999999955px;top:311.56px;font-size:16px;line-height:16px;letter-spacing:0.3px;">4/21/2025 10:42:10 PM</div>
<div class="t" style="left:273px;top:311.56px;font-size:16px;line-height:16px;letter-spacing:0.05px;">Windows Update</div>
<div class="t" style="left:662px;top:311.56px;font-size:16px;line-height:16px;letter-spacing:0.05px;">Windows Update</div>
<div class="t" style="left:39.799999999999955px;top:334.56px;font-size:16px;line-height:16px;letter-spacing:0.3px;">4/18/2025 4:47:01 PM</div>
<div class="t" style="left:273px;top:334.56px;font-size:16px;line-height:16px;letter-spacing:0.05px;">Windows Update</div>
<div class="t" style="left:662px;top:334.56px;font-size:16px;line-height:16px;letter-spacing:0.05px;">Windows Update</div>
<div class="btn" style="left:580px;top:532.5px;width:233.5px;height:30.5px;border-color:#d0d0d0"></div>
<div class="t" style="left:601px;top:541.46px;font-size:16px;line-height:16px;letter-spacing:-0.05px;">Scan for affected programs</div>
<div style="position:absolute;left:0px;top:598.5px;width:847px;height:1px;background:#c8c8c8"></div>
<div class="btn" style="left:478px;top:622px;width:110px;height:30.5px;border-color:#d0d0d0"></div>
<div class="t" style="left:510px;top:631.46px;font-size:16px;line-height:16px;">&lt; Back</div>
<div class="btn" style="left:591px;top:622px;width:110px;height:30.5px;border-color:#d0d0d0"></div>
<div class="t" style="left:621.5px;top:631.46px;font-size:16px;line-height:16px;">Next &gt;</div>
<div class="btn" style="left:718.5px;top:622px;width:110.5px;height:30.5px;border-color:#d0d0d0"></div>
<div class="t" style="left:751.5px;top:631.46px;font-size:16px;line-height:16px;">Cancel</div>
</div>
<svg width="22" height="30" style="left:1529px;top:719px" viewBox="0 0 22 30"><path d="M1.5 1.5 L1.5 24 L7 19 L11 28 L14.5 26.5 L10.5 17.5 L18 17.5Z" fill="#fff" stroke="#000" stroke-width="1.2" stroke-linejoin="round"/></svg>
<div class="dlg" style="left:73px;top:351px;width:673px;height:771px;border-radius:8px 8px 0 0;box-shadow:0 0 0 1px rgba(60,60,60,.3),0 8px 28px rgba(0,0,0,.3);">
<div style="position:absolute;left:0px;top:0px;width:673px;height:42px;background:#eef2f6"></div>
<svg width="29.0" height="26.9" style="left:8.2px;top:6.3px" viewBox="0 0 54 50"><defs><linearGradient id="scr4" x1="0" y1="0" x2="1" y2="1"><stop offset="0" stop-color="#0818a8"/><stop offset="0.55" stop-color="#0a1ad0"/><stop offset="1" stop-color="#90a8f8"/></linearGradient></defs><path d="M7 22 L17.5 20 L17.5 43 L7 43Z" fill="#d4d4d4" stroke="#9a9a9a" stroke-width="0.6"/><path d="M7 21.5 L9.5 21.2 L9.5 43 L7 43Z" fill="#6a6a6a"/><ellipse cx="31.5" cy="42.5" rx="9" ry="3.8" fill="#dcdcdc" stroke="#a8a8a8" stroke-width="0.6"/><path d="M18.3 12 L45 17 L43.7 38.7 L16.7 34.6Z" fill="#eaeaf2" stroke="#a0a0b0" stroke-width="0.7"/><path d="M21 15 L42 18.5 L41.7 36.7 L18.7 32.5Z" fill="url(#scr4)"/><path d="M21 15 L27 16 L33 35.5 L18.7 32.5Z" fill="#2a3ad8" opacity="0.55"/><circle cx="40" cy="16.7" r="9.4" fill="#e2ecf4" stroke="#9aa4b0" stroke-width="0.9"/><path d="M40 9.5 L40 16.7 L46 16.7" stroke="#4a5a70" stroke-width="0.8" fill="none"/><path d="M44.5 5 Q34 3.5 28 12 L24.5 10.5 L31.5 18.5 L35.5 13.8 L31.5 13.5 Q36 9 44.5 9.5Z" fill="#5ad05a" stroke="#3a9a3a" stroke-width="0.5"/></svg>
<div class="t" style="left:42.5px;top:11.56px;font-size:18px;line-height:18px;letter-spacing:-0.4px;">System Restore</div>
<svg width="18" height="18" style="left:639px;top:11.5px" viewBox="0 0 18 18"><path d="M1.5 1.5 L16.5 16.5 M16.5 1.5 L1.5 16.5" stroke="#1a1a1a" stroke-width="1.4"/></svg>
<div class="t" style="left:25.700000000000003px;top:82.46px;font-size:16px;line-height:16px;letter-spacing:0.05px;">Description:</div>
<div class="t" style="left:180.2px;top:82.46px;font-size:16px;line-height:16px;">Windows Modules Installer</div>
<div class="t" style="left:25.700000000000003px;top:117.06px;font-size:16px;line-height:16px;">Date:</div>
<div class="t" style="left:180.2px;top:117.06px;font-size:16px;line-height:16px;letter-spacing:0.1px;">4/21/2025 10:46:33 PM</div>
<div class="t" style="left:25.700000000000003px;top:152.66px;font-size:16px;line-height:16px;letter-spacing:-0.03px;">Any programs that were added since the last restore point will be deleted and any that</div>
<div class="t" style="left:25.700000000000003px;top:171.66px;font-size:16px;line-height:16px;letter-spacing:-0.03px;">were removed will be restored.</div>
<div class="t" style="left:25.700000000000003px;top:223.76px;font-size:16px;line-height:16px;letter-spacing:0.05px;">Programs and drivers that will be deleted:</div>
<div class="t" style="left:25.700000000000003px;top:470.66px;font-size:16px;line-height:16px;letter-spacing:0.08px;">Programs and drivers that might be restored. These programs might not work correctly</div>
<div class="t" style="left:25.700000000000003px;top:489.26px;font-size:16px;line-height:16px;letter-spacing:0.08px;">after restore and might need to be reinstalled:</div>
<div style="position:absolute;left:25.4px;top:245.5px;width:622.1px;height:199.0px;background:#fff;border:1px solid #8c8c8c;box-sizing:border-box;overflow:hidden">
<div style="position:absolute;left:593.6px;top:0px;width:30px;height:400px;background:#f0f0f0"></div>
<div style="position:absolute;left:605.6px;top:26.5px;width:3px;height:67px;background:#858585;border-radius:1.5px"></div>
<div style="position:absolute;left:415.1px;top:2px;width:1px;height:20px;background:#e8e8e8"></div>
<div class="t" style="left:6.2px;top:6.46px;font-size:16px;line-height:16px;letter-spacing:0.05px;">Description</div>
<div class="t" style="left:422.1px;top:6.46px;font-size:16px;line-height:16px;letter-spacing:0.05px;">Type</div>
<div style="position:absolute;left:1px;top:48.2px;width:592.6px;height:1px;background:#f0f0f0"></div>
<div style="position:absolute;left:415.1px;top:25.8px;width:1px;height:23px;background:#f4f4f4"></div>
<div style="position:absolute;left:6.2px;top:29.3px;width:406px;height:22px;overflow:hidden">
<div class="t" style="left:0px;top:0.96px;font-size:16px;line-height:16px;letter-spacing:0.2px;">Microsoft 365 - en-us 16.0.18812.20002</div>
</div>
<div class="t" style="left:422.1px;top:30.26px;font-size:16px;line-height:16px;letter-spacing:0.05px;">Program</div>
<div style="position:absolute;left:1px;top:71.2px;width:592.6px;height:1px;background:#f0f0f0"></div>
<div style="position:absolute;left:415.1px;top:48.8px;width:1px;height:23px;background:#f4f4f4"></div>
<div style="position:absolute;left:6.2px;top:52.3px;width:406px;height:22px;overflow:hidden">
<div class="t" style="left:0px;top:0.96px;font-size:16px;line-height:16px;letter-spacing:0.2px;">Microsoft (Bluetooth) 6/20/2006 10.0.26100.5562 (bth...</div>
</div>
<div class="t" style="left:422.1px;top:53.26px;font-size:16px;line-height:16px;letter-spacing:0.05px;">Driver</div>
<div style="position:absolute;left:1px;top:94.2px;width:592.6px;height:1px;background:#f0f0f0"></div>
<div style="position:absolute;left:415.1px;top:71.8px;width:1px;height:23px;background:#f4f4f4"></div>
<div style="position:absolute;left:6.2px;top:75.3px;width:406px;height:22px;overflow:hidden">
<div class="t" style="left:0px;top:0.96px;font-size:16px;line-height:16px;letter-spacing:0.2px;">Microsoft (Camera) 6/20/2006 10.0.26100.5562 (usbvi...</div>
</div>
<div class="t" style="left:422.1px;top:76.26px;font-size:16px;line-height:16px;letter-spacing:0.05px;">Driver</div>
<div style="position:absolute;left:1px;top:117.2px;width:592.6px;height:1px;background:#f0f0f0"></div>
<div style="position:absolute;left:415.1px;top:94.8px;width:1px;height:23px;background:#f4f4f4"></div>
<div style="position:absolute;left:6.2px;top:98.3px;width:406px;height:22px;overflow:hidden">
<div class="t" style="left:0px;top:0.96px;font-size:16px;line-height:16px;letter-spacing:0.2px;">Microsoft (Generic) 6/20/2006 10.0.26100.5562 (netcx...</div>
</div>
<div class="t" style="left:422.1px;top:99.26px;font-size:16px;line-height:16px;letter-spacing:0.05px;">Driver</div>
<div style="position:absolute;left:1px;top:140.2px;width:592.6px;height:1px;background:#f0f0f0"></div>
<div style="position:absolute;left:415.1px;top:117.8px;width:1px;height:23px;background:#f4f4f4"></div>
<div style="position:absolute;left:6.2px;top:121.3px;width:406px;height:22px;overflow:hidden">
<div class="t" style="left:0px;top:0.96px;font-size:16px;line-height:16px;letter-spacing:0.2px;">Microsoft (HIDClass) 4/14/2025 10.0.26100.5562 (sdc...</div>
</div>
<div class="t" style="left:422.1px;top:122.26px;font-size:16px;line-height:16px;letter-spacing:0.05px;">Driver</div>
<div style="position:absolute;left:1px;top:163.2px;width:592.6px;height:1px;background:#f0f0f0"></div>
<div style="position:absolute;left:415.1px;top:140.8px;width:1px;height:23px;background:#f4f4f4"></div>
<div style="position:absolute;left:6.2px;top:144.3px;width:406px;height:22px;overflow:hidden">
<div class="t" style="left:0px;top:0.96px;font-size:16px;line-height:16px;letter-spacing:0.2px;">Microsoft (MEDIA) 4/14/2025 10.0.26100.5562 (sdcacl...</div>
</div>
<div class="t" style="left:422.1px;top:145.26px;font-size:16px;line-height:16px;letter-spacing:0.05px;">Driver</div>
<div style="position:absolute;left:1px;top:186.2px;width:592.6px;height:1px;background:#f0f0f0"></div>
<div style="position:absolute;left:415.1px;top:163.8px;width:1px;height:23px;background:#f4f4f4"></div>
<div style="position:absolute;left:6.2px;top:167.3px;width:406px;height:22px;overflow:hidden">
<div class="t" style="left:0px;top:0.96px;font-size:16px;line-height:16px;letter-spacing:0.2px;">Microsoft (Miracast) 6/20/2006 10.0.26100.5562 (mira...</div>
</div>
<div class="t" style="left:422.1px;top:168.26px;font-size:16px;line-height:16px;letter-spacing:0.05px;">Driver</div>
<div style="position:absolute;left:1px;top:209.2px;width:592.6px;height:1px;background:#f0f0f0"></div>
<div style="position:absolute;left:415.1px;top:186.8px;width:1px;height:23px;background:#f4f4f4"></div>
<div style="position:absolute;left:6.2px;top:190.3px;width:406px;height:22px;overflow:hidden">
<div class="t" style="left:0px;top:0.96px;font-size:16px;line-height:16px;letter-spacing:0.2px;">Microsoft (Net) 4/20/2009 10.0.26100.5562 (ushnsm i...</div>
</div>
<div class="t" style="left:422.1px;top:191.26px;font-size:16px;line-height:16px;letter-spacing:0.05px;">Driver</div>
</div>
<div style="position:absolute;left:25.4px;top:511.5px;width:622.1px;height:199.0px;background:#fff;border:1px solid #8c8c8c;box-sizing:border-box;overflow:hidden">
<div style="position:absolute;left:593.6px;top:0px;width:30px;height:400px;background:#f0f0f0"></div>
<div style="position:absolute;left:605.6px;top:27.0px;width:3px;height:71.0px;background:#858585;border-radius:1.5px"></div>
<div style="position:absolute;left:415.1px;top:2px;width:1px;height:20px;background:#e8e8e8"></div>
<div class="t" style="left:6.2px;top:6.56px;font-size:16px;line-height:16px;letter-spacing:0.05px;">Description</div>
<div class="t" style="left:422.1px;top:6.56px;font-size:16px;line-height:16px;letter-spacing:0.05px;">Type</div>
<div style="position:absolute;left:1px;top:48.3px;width:592.6px;height:1px;background:#f0f0f0"></div>
<div style="position:absolute;left:415.1px;top:25.9px;width:1px;height:23px;background:#f4f4f4"></div>
<div style="position:absolute;left:6.2px;top:29.4px;width:406px;height:22px;overflow:hidden">
<div class="t" style="left:0px;top:0.96px;font-size:16px;line-height:16px;letter-spacing:0.2px;">Microsoft 365 - en-us 16.0.18803.20002</div>
</div>
<div class="t" style="left:422.1px;top:30.36px;font-size:16px;line-height:16px;letter-spacing:0.05px;">Program</div>
<div style="position:absolute;left:1px;top:71.3px;width:592.6px;height:1px;background:#f0f0f0"></div>
<div style="position:absolute;left:415.1px;top:48.9px;width:1px;height:23px;background:#f4f4f4"></div>
<div style="position:absolute;left:6.2px;top:52.4px;width:406px;height:22px;overflow:hidden">
<div class="t" style="left:0px;top:0.96px;font-size:16px;line-height:16px;letter-spacing:0.2px;">Microsoft (Bluetooth) 6/20/2006 10.0.26100.5551 (bth...</div>
</div>
<div class="t" style="left:422.1px;top:53.36px;font-size:16px;line-height:16px;letter-spacing:0.05px;">Driver</div>
<div style="position:absolute;left:1px;top:94.3px;width:592.6px;height:1px;background:#f0f0f0"></div>
<div style="position:absolute;left:415.1px;top:71.9px;width:1px;height:23px;background:#f4f4f4"></div>
<div style="position:absolute;left:6.2px;top:75.4px;width:406px;height:22px;overflow:hidden">
<div class="t" style="left:0px;top:0.96px;font-size:16px;line-height:16px;letter-spacing:0.2px;">Microsoft (Camera) 6/20/2006 10.0.26100.5551 (usbvi...</div>
</div>
<div class="t" style="left:422.1px;top:76.36px;font-size:16px;line-height:16px;letter-spacing:0.05px;">Driver</div>
<div style="position:absolute;left:1px;top:117.3px;width:592.6px;height:1px;background:#f0f0f0"></div>
<div style="position:absolute;left:415.1px;top:94.9px;width:1px;height:23px;background:#f4f4f4"></div>
<div style="position:absolute;left:6.2px;top:98.4px;width:406px;height:22px;overflow:hidden">
<div class="t" style="left:0px;top:0.96px;font-size:16px;line-height:16px;letter-spacing:0.2px;">Microsoft (Generic) 6/20/2006 10.0.26100.5551 (netcx...</div>
</div>
<div class="t" style="left:422.1px;top:99.36px;font-size:16px;line-height:16px;letter-spacing:0.05px;">Driver</div>
<div style="position:absolute;left:1px;top:140.3px;width:592.6px;height:1px;background:#f0f0f0"></div>
<div style="position:absolute;left:415.1px;top:117.9px;width:1px;height:23px;background:#f4f4f4"></div>
<div style="position:absolute;left:6.2px;top:121.4px;width:406px;height:22px;overflow:hidden">
<div class="t" style="left:0px;top:0.96px;font-size:16px;line-height:16px;letter-spacing:0.2px;">Microsoft (HIDClass) 3/18/2025 10.0.26100.5514 (sdc...</div>
</div>
<div class="t" style="left:422.1px;top:122.36px;font-size:16px;line-height:16px;letter-spacing:0.05px;">Driver</div>
<div style="position:absolute;left:1px;top:163.3px;width:592.6px;height:1px;background:#f0f0f0"></div>
<div style="position:absolute;left:415.1px;top:140.9px;width:1px;height:23px;background:#f4f4f4"></div>
<div style="position:absolute;left:6.2px;top:144.4px;width:406px;height:22px;overflow:hidden">
<div class="t" style="left:0px;top:0.96px;font-size:16px;line-height:16px;letter-spacing:0.2px;">Microsoft (MEDIA) 4/3/2025 10.0.26100.5551 (sdcacla...</div>
</div>
<div class="t" style="left:422.1px;top:145.36px;font-size:16px;line-height:16px;letter-spacing:0.05px;">Driver</div>
<div style="position:absolute;left:1px;top:186.3px;width:592.6px;height:1px;background:#f0f0f0"></div>
<div style="position:absolute;left:415.1px;top:163.9px;width:1px;height:23px;background:#f4f4f4"></div>
<div style="position:absolute;left:6.2px;top:167.4px;width:406px;height:22px;overflow:hidden">
<div class="t" style="left:0px;top:0.96px;font-size:16px;line-height:16px;letter-spacing:0.2px;">Microsoft (Miracast) 6/20/2006 10.0.26100.5510 (mira...</div>
</div>
<div class="t" style="left:422.1px;top:168.36px;font-size:16px;line-height:16px;letter-spacing:0.05px;">Driver</div>
<div style="position:absolute;left:1px;top:209.3px;width:592.6px;height:1px;background:#f0f0f0"></div>
<div style="position:absolute;left:415.1px;top:186.9px;width:1px;height:23px;background:#f4f4f4"></div>
<div style="position:absolute;left:6.2px;top:190.4px;width:406px;height:22px;overflow:hidden">
<div class="t" style="left:0px;top:0.96px;font-size:16px;line-height:16px;letter-spacing:0.2px;">Microsoft (Net) 4/20/2009 10.0.26100.5510 (ushnsm i...</div>
</div>
<div class="t" style="left:422.1px;top:191.36px;font-size:16px;line-height:16px;letter-spacing:0.05px;">Driver</div>
</div>
<div class="btn" style="left:537.3px;top:745.2px;width:110.5px;height:40px;border:1.5px solid #1a78c8;background:#fcfdff"></div>
<div class="t" style="left:573.4px;top:753.66px;font-size:16px;line-height:16px;letter-spacing:-0.5px;">Close</div>
</div>
<svg width="1922" height="80" style="left:0;top:1122px" viewBox="0 1122 1922 80">
<defs>
<linearGradient id="tbg" x1="0" y1="0" x2="1922" y2="0" gradientUnits="userSpaceOnUse">
<stop offset="0" stop-color="#2c1e5e"/><stop offset="0.2" stop-color="#3a2460"/><stop offset="0.36" stop-color="#4a2550"/><stop offset="0.47" stop-color="#6a2232"/>
<stop offset="0.53" stop-color="#7e2220"/><stop offset="0.64" stop-color="#78301a"/><stop offset="0.76" stop-color="#6a4a1c"/><stop offset="1" stop-color="#6c4618"/></linearGradient>
<linearGradient id="tbout" x1="0" y1="0" x2="1922" y2="0" gradientUnits="userSpaceOnUse">
<stop offset="0" stop-color="#36267a"/><stop offset="0.3" stop-color="#5a3070"/><stop offset="0.45" stop-color="#9a4a60"/><stop offset="0.6" stop-color="#d06048"/><stop offset="0.8" stop-color="#e88040"/><stop offset="1" stop-color="#e8a858"/></linearGradient>
</defs>
<rect x="0" y="1122" width="1922" height="80" fill="url(#tbout)"/>
<rect x="18" y="1122" width="1886" height="71.5" rx="8" fill="url(#tbg)"/>
<rect x="18.5" y="1122.5" width="1885" height="70.5" rx="8" fill="none" stroke="#ffffff" stroke-opacity="0.08"/>
<rect x="1140" y="1128.5" width="65" height="59" rx="6" fill="#ffffff" fill-opacity="0.06" stroke="#ffffff" stroke-opacity="0.05"/>
<rect x="0" y="1200" width="1922" height="2" fill="#0c0c18"/>
<rect x="0" y="1121" width="2" height="81" fill="#10142a"/>
<rect x="1920" y="1121" width="2" height="81" fill="#10142a"/>
</svg>
<svg width="40" height="42" style="left:34px;top:1126px" viewBox="0 0 40 42"><path d="M8 22 Q8 14 16 12 Q10 20 18 26Z" fill="#f0a020"/><path d="M6 38 Q0 38 1 31 Q2 25 9 26 Q12 18 20 19 Q28 20 30 27 Q36 27 36 33 Q36 38 30 38Z" fill="#c0d4f4"/><circle cx="26" cy="11" r="11" fill="#f4a0a8"/><text x="26" y="17" font-size="15" text-anchor="middle" fill="#111" font-family="Liberation Sans">2</text></svg>
<svg width="33" height="33" style="left:212.5px;top:1142.5px" viewBox="0 0 33 33"><defs><linearGradient id="st" x1="0" y1="0" x2="1" y2="1"><stop offset="0" stop-color="#60d8fa"/><stop offset="1" stop-color="#1a9ae0"/></linearGradient></defs><rect x="0" y="0" width="15.5" height="15.5" rx="1.5" fill="url(#st)"/><rect x="17.5" y="0" width="15.5" height="15.5" rx="1.5" fill="url(#st)"/><rect x="0" y="17.5" width="15.5" height="15.5" rx="1.5" fill="url(#st)"/><rect x="17.5" y="17.5" width="15.5" height="15.5" rx="1.5" fill="url(#st)"/></svg>
<svg width="34" height="30" style="left:287px;top:1143px" viewBox="0 0 34 30"><rect x="0" y="9" width="24" height="21" rx="2" fill="#5a5a60"/><rect x="8" y="0" width="26" height="22" rx="2" fill="#e8e8ec"/><rect x="8" y="9" width="16" height="13" fill="#a8a8ae"/></svg>
<svg width="35" height="35" style="left:358.5px;top:1141px" viewBox="0 0 35 35"><path d="M17 0 L21 0 L22 5 L27 7 L31 4 L34 7 L31 11 L33 16 L38 17 L38 21 L33 22 L31 27 L34 31 L31 34 L27 31 L22 33 L21 38 L17 38 L16 33 L11 31 L7 34 L4 31 L7 27 L5 22 L0 21 L0 17 L5 16 L7 11 L4 7 L7 4 L11 7 L16 5Z" fill="#8a8e98" transform="scale(0.9)"/><circle cx="17" cy="17" r="8.5" fill="#fff"/><circle cx="17" cy="17" r="6.5" fill="#1a5ac8"/></svg>
<svg width="34" height="34" style="left:430.7px;top:1141.5px" viewBox="0 0 34 34"><defs><linearGradient id="edA" x1="0" y1="1" x2="1" y2="0"><stop offset="0" stop-color="#0a5cc4"/><stop offset="0.45" stop-color="#1a8ee4"/><stop offset="0.7" stop-color="#28c0d8"/><stop offset="1" stop-color="#78e450"/></linearGradient></defs><path d="M17 0.5 A16.5 16.5 0 0 1 33.5 17 Q33.5 22 28.5 22.5 L20 22.5 Q17 22.5 17 19.5 Q17 16 20.5 15 Q14 11 9 15.5 Q4.5 20 7 26 Q10.5 33 19 33 Q23.5 33 27 31 Q22 34.5 15 33.5 Q0.5 31 0.5 17 A16.5 16.5 0 0 1 17 0.5Z" fill="url(#edA)"/><path d="M9 15.5 Q14 11 20.5 15 Q17 16 17 19.5 Q17 22.5 20 22.5 L28 22.5 Q26 30 19 33 Q10.5 33 7 26 Q4.5 20 9 15.5Z" fill="#0c56b4"/><circle cx="21" cy="19" r="3.6" fill="#3e2658"/></svg>
<svg width="34" height="34" style="left:502.5px;top:1143px" viewBox="0 0 34 34"><path d="M10 8 L26 0 L34 8 L34 30 Q34 34 30 34 L12 34 Q8 34 8 30Z" fill="#1a8ae8"/><path d="M12 10 L34 8 L34 20Z" fill="#0a4aa8"/><path d="M8 18 L34 10 L34 30 Q34 34 30 34 L12 34 Q8 34 8 30Z" fill="#38b8f0"/><rect x="0" y="10" width="17" height="17" rx="2" fill="#0a5ac8"/><text x="8.5" y="24" font-size="13" font-weight="bold" text-anchor="middle" fill="#fff" font-family="Liberation Sans">O</text></svg>
<svg width="33" height="33" style="left:574.5px;top:1143px" viewBox="0 0 33 33"><rect x="9" y="0" width="24" height="33" rx="2" fill="#0a64c8"/><rect x="21" y="0" width="12" height="16" fill="#28a8e8"/><rect x="9" y="16" width="24" height="17" fill="#1890e0"/><rect x="0" y="8" width="17" height="17" rx="2" fill="#0a50a8"/><text x="8.5" y="22" font-size="13" font-weight="bold" text-anchor="middle" fill="#fff" font-family="Liberation Sans">O</text></svg>
<svg width="33" height="34" style="left:647px;top:1142px" viewBox="0 0 33 34"><rect x="9" y="0" width="24" height="33" rx="2" fill="#41a5ee"/><rect x="9" y="8" width="24" height="9" fill="#2b7cd3"/><rect x="9" y="17" width="24" height="8" fill="#185abd"/><rect x="9" y="25" width="24" height="8" fill="#103f91"/><rect x="0" y="8" width="17" height="17" rx="2" fill="#185abd"/><text x="8.5" y="22" font-size="12" font-weight="bold" text-anchor="middle" fill="#fff" font-family="Liberation Sans">W</text></svg>
<svg width="33.0" height="33.0" style="left:719px;top:1142px" viewBox="0 0 33.0 33.0"><path d="M30.79 8.25 A16.5 16.5 0 0 0 2.21 8.25 L9.43 20.58 A8.17 8.17 0 0 1 16.50 8.33 Z" fill="#e8453c"/><path d="M2.21 8.25 A16.5 16.5 0 0 0 16.50 33.00 L23.57 20.58 A8.17 8.17 0 0 1 9.43 20.58 Z" fill="#2a9d4a"/><path d="M16.50 33.00 A16.5 16.5 0 0 0 30.79 8.25 L16.50 8.33 A8.17 8.17 0 0 1 23.57 20.58 Z" fill="#fbc531"/><circle cx="16.5" cy="16.5" r="8.17" fill="#fff"/><circle cx="16.5" cy="16.5" r="6.76" fill="#3a7ee4"/></svg>
<svg width="34" height="32" style="left:791.5px;top:1143px" viewBox="0 0 34 32"><path d="M0 4 Q0 1 3 1 L12 1 L15 4 L31 4 Q34 4 34 7 L34 29 Q34 31 31 31 L3 31 Q0 31 0 29Z" fill="#f0b818"/><path d="M0 8 L34 8 L34 29 Q34 31 31 31 L3 31 Q0 31 0 29Z" fill="#ffd54a"/><rect x="10" y="21" width="15" height="10" rx="2" fill="#1a7ad8"/><rect x="13" y="24" width="9" height="2" fill="#0a4a98"/></svg>
<svg width="32" height="34" style="left:866px;top:1141px" viewBox="0 0 32 34"><ellipse cx="16" cy="17" rx="16" ry="16.5" fill="#e8101e"/><ellipse cx="16" cy="17" rx="7" ry="11.5" fill="#6a1a20"/></svg>
<svg width="32" height="32" style="left:941px;top:1142px" viewBox="0 0 32 32"><circle cx="16" cy="16" r="15.5" fill="#d8d0c8" stroke="#8a8a8a" stroke-width="1.5"/><circle cx="16" cy="16" r="12" fill="#f4f0ea"/><path d="M10 6 L20 24" stroke="#d03020" stroke-width="2"/></svg>
<svg width="34" height="34" style="left:1017px;top:1142px" viewBox="0 0 34 34"><rect x="9" y="0" width="24" height="33" rx="2" fill="#21a366"/><rect x="21" y="0" width="12" height="16" fill="#33c481"/><rect x="9" y="16" width="24" height="9" fill="#107c41"/><rect x="9" y="25" width="24" height="8" fill="#185c37"/><rect x="0" y="8" width="17" height="17" rx="2" fill="#107c41"/><text x="8.5" y="22" font-size="12" font-weight="bold" text-anchor="middle" fill="#fff" font-family="Liberation Sans">X</text></svg>
<svg width="33" height="33" style="left:1089.5px;top:1142px" viewBox="0 0 33 33"><path d="M1 10 L8 9 L8 28 L1 29Z" fill="#c8c8c8"/><path d="M6 3 L32 6 L30 26 L4 23Z" fill="#e8e8e8" stroke="#999" stroke-width="0.8"/><path d="M8 6 L30 8.5 L28.5 23.5 L6 21Z" fill="#1028c8"/><path d="M14 14 L18 18 L26 9" stroke="#fff" stroke-width="2.4" fill="none"/><ellipse cx="19" cy="29" rx="8" ry="3" fill="#ddd"/></svg>
<svg width="40.0" height="37.0" style="left:1151.5px;top:1137.3px" viewBox="0 0 54 50"><defs><linearGradient id="scr5" x1="0" y1="0" x2="1" y2="1"><stop offset="0" stop-color="#0818a8"/><stop offset="0.55" stop-color="#0a1ad0"/><stop offset="1" stop-color="#90a8f8"/></linearGradient></defs><path d="M7 22 L17.5 20 L17.5 43 L7 43Z" fill="#d4d4d4" stroke="#9a9a9a" stroke-width="0.6"/><path d="M7 21.5 L9.5 21.2 L9.5 43 L7 43Z" fill="#6a6a6a"/><ellipse cx="31.5" cy="42.5" rx="9" ry="3.8" fill="#dcdcdc" stroke="#a8a8a8" stroke-width="0.6"/><path d="M18.3 12 L45 17 L43.7 38.7 L16.7 34.6Z" fill="#eaeaf2" stroke="#a0a0b0" stroke-width="0.7"/><path d="M21 15 L42 18.5 L41.7 36.7 L18.7 32.5Z" fill="url(#scr5)"/><path d="M21 15 L27 16 L33 35.5 L18.7 32.5Z" fill="#2a3ad8" opacity="0.55"/><circle cx="40" cy="16.7" r="9.4" fill="#e2ecf4" stroke="#9aa4b0" stroke-width="0.9"/><path d="M40 9.5 L40 16.7 L46 16.7" stroke="#4a5a70" stroke-width="0.8" fill="none"/><path d="M44.5 5 Q34 3.5 28 12 L24.5 10.5 L31.5 18.5 L35.5 13.8 L31.5 13.5 Q36 9 44.5 9.5Z" fill="#5ad05a" stroke="#3a9a3a" stroke-width="0.5"/></svg>
<div style="position:absolute;left:515px;top:1182px;width:8px;height:5px;background:#c0a8b4;border-radius:3px"></div>
<div style="position:absolute;left:659px;top:1182px;width:8px;height:5px;background:#c0a8b4;border-radius:3px"></div>
<div style="position:absolute;left:731px;top:1182px;width:8px;height:5px;background:#c0a8b4;border-radius:3px"></div>
<div style="position:absolute;left:877px;top:1182px;width:8px;height:5px;background:#c0a8b4;border-radius:3px"></div>
<div style="position:absolute;left:952px;top:1182px;width:8px;height:5px;background:#c0a8b4;border-radius:3px"></div>
<div style="position:absolute;left:1030px;top:1182px;width:8px;height:5px;background:#c0a8b4;border-radius:3px"></div>
<div style="position:absolute;left:1102px;top:1182px;width:8px;height:5px;background:#c0a8b4;border-radius:3px"></div>
<div style="position:absolute;left:1161px;top:1181px;width:22px;height:6px;background:#5ac8e0;border-radius:3px"></div>
<svg width="17" height="12" style="left:1460px;top:1152px" viewBox="0 0 17 12"><path d="M1.5 10 L8.5 3 L15.5 10" stroke="#f4ead8" stroke-width="2" fill="none"/></svg>
<svg width="22" height="25" style="left:1507.5px;top:1147px" viewBox="0 0 22 25"><rect x="5" y="1" width="8" height="6" fill="none" stroke="#f4ead8" stroke-width="1.6"/><path d="M3 7 L15 7 L15 12 M3 7 L3 23 L10 23" stroke="#f4ead8" stroke-width="1.6" fill="none"/><circle cx="14.5" cy="17.5" r="6" fill="#f4ead8"/><path d="M11.5 17.5 L13.8 19.8 L17.5 15.5" stroke="#6a4a1a" stroke-width="1.6" fill="none"/></svg>
<svg width="27" height="18" style="left:1551px;top:1150px" viewBox="0 0 27 18"><path d="M5 17 Q0 17 1 12 Q2 8 7 9 Q9 2 15 2 Q21 2 22 8 Q26 8 26 12 Q26 17 21 17Z" fill="#e8e0d0"/><path d="M1 14 L12 8 L26 14 L24 17 L5 17Z" fill="#fff" opacity="0.6"/></svg>
<svg width="25" height="25" style="left:1599.5px;top:1147px" viewBox="0 0 25 25"><rect x="1" y="1" width="17" height="14" fill="none" stroke="#f4ead8" stroke-width="1.6"/><path d="M9.5 15 L9.5 21 M5 21 L14 21" stroke="#f4ead8" stroke-width="1.6"/><rect x="18" y="1" width="5" height="8" rx="2" fill="none" stroke="#f4ead8" stroke-width="1.4"/><path d="M20.5 9 L20.5 24" stroke="#f4ead8" stroke-width="1.4"/></svg>
<svg width="25" height="21" style="left:1636px;top:1149px" viewBox="0 0 25 21"><path d="M1 7 L5 7 L10 2 L10 18 L5 13 L1 13Z" fill="none" stroke="#f4ead8" stroke-width="1.6" stroke-linejoin="round"/><path d="M13 7 Q15 10 13 13 M16 4 Q20 10 16 16 M19 1 Q25 10 19 19" stroke="#f4ead8" stroke-width="1.6" fill="none"/></svg>
<svg width="31" height="22" style="left:1671.5px;top:1146px" viewBox="0 0 31 22"><rect x="1" y="5" width="26" height="14" rx="3" fill="#90d088" stroke="#f4ead8" stroke-width="1.8"/><rect x="27" y="9" width="3" height="6" fill="#f4ead8"/><path d="M15 0 L11 10 L15 10 L13 16 L19 7 L15 7 L17 0Z" fill="#f4ead8"/></svg>
<svg width="190" height="60" style="left:1716px;top:1122px;opacity:0.75" viewBox="0 0 190 60"><path d="M5 2 L22 2 L22 8 L13 8 L13 40 L18 40 L16 53 L11 44 L5 44Z" fill="#c03a40"/><path d="M31 2 L48 2 L48 40 L31 40 L31 34 L40 34 L40 8 L31 8Z" fill="#2a78a8"/><path d="M57 2 L67 2 L78 18 L89 2 L99 2 L83 21 L99 40 L89 40 L78 25 L67 40 L57 40 L73 21Z" fill="#c8c0b0"/><path d="M102 2 L128 2 Q140 2 140 14 L140 28 Q140 40 128 40 L102 40Z M110 8 L110 34 L126 34 Q132 34 132 28 L132 14 Q132 8 126 8Z" fill="#c8c0b0" fill-rule="evenodd"/><path d="M142 40 L142 14 Q142 2 154 2 L170 2 Q182 2 182 14 L182 40 L174 40 L174 30 L150 30 L150 40Z M150 24 L174 24 L174 14 Q174 8 168 8 L156 8 Q150 8 150 14Z" fill="#c8c0b0" fill-rule="evenodd"/></svg>
<div class="t" style="left:1707.5px;top:1151.03px;font-size:16.5px;line-height:16.5px;color:#f4ead8;letter-spacing:0.3px;">100%</div>
<div class="t" style="left:1788px;top:1138.11px;font-size:17px;line-height:17px;color:#fff;letter-spacing:0.9px;">6:25 AM</div>
<div class="t" style="left:1771px;top:1162.11px;font-size:17px;line-height:17px;color:#f8f0e0;letter-spacing:0.75px;">4/22/2025</div>
<svg width="23" height="24" style="left:1866px;top:1147px" viewBox="0 0 23 24"><path d="M3 18 Q5 15 5 10 Q5 3 11 3 Q17 3 17 10 Q17 15 19 18Z" fill="none" stroke="#f4ead8" stroke-width="1.6"/><path d="M8 20 Q11 23 14 20" stroke="#f4ead8" stroke-width="1.4" fill="none"/><text x="11" y="15" font-size="8" font-weight="bold" text-anchor="middle" fill="#f4ead8" font-family="Liberation Sans">z</text><text x="18" y="6" font-size="7" font-weight="bold" fill="#f4ead8" font-family="Liberation Sans">z</text></svg>
</body></html>
